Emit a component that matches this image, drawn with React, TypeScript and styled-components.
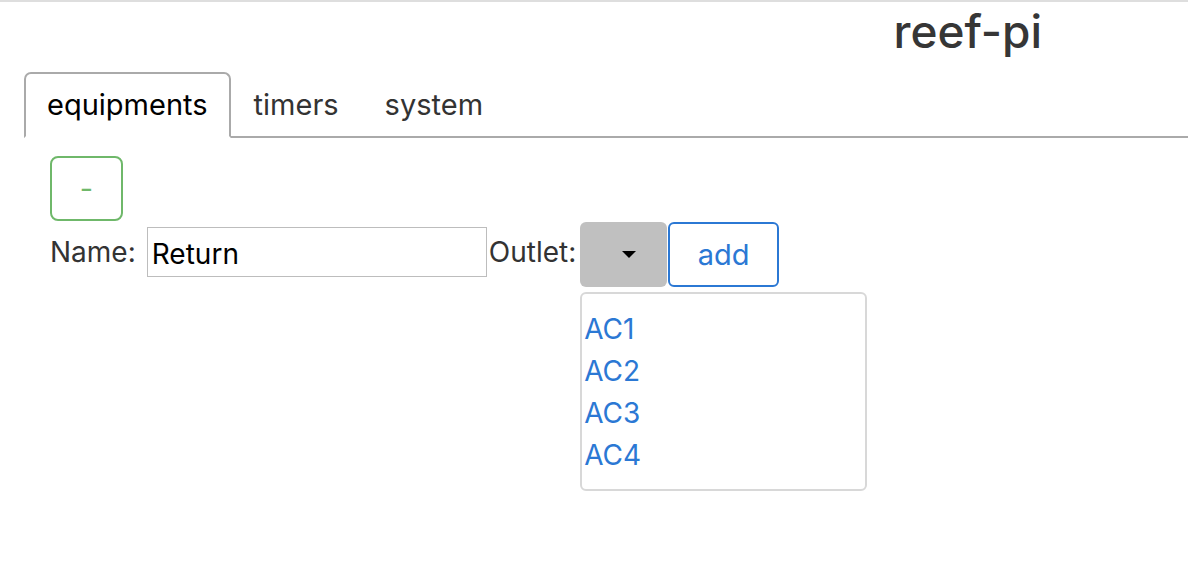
import styled, { createGlobalStyle } from "styled-components";

const GlobalStyle = createGlobalStyle`
  html, body {
    margin: 0;
    padding: 0;
    background: #fff;
  }
  body {
    font-family: Inter, "Liberation Sans", Arial, sans-serif;
    color: #333;
  }
`;

const outlets = ["AC1", "AC2", "AC3", "AC4"];
const tabs = ["equipments", "timers", "system"];

const App = () => {
  return (
    <>
      <GlobalStyle />
      <Page>
        <Header>
          <Title>reef-pi</Title>
        </Header>
        <TabList>
          {tabs.map((name, i) => (
            <Tab key={name} active={i === 0}>{name}</Tab>
          ))}
        </TabList>
        <Content>
          <RemoveButton>-</RemoveButton>
          <FormRow>
            <Label>Name:</Label>
            <NameInput defaultValue="Return" />
            <Label>Outlet:</Label>
            <Dropdown>
              <Toggle>
                <Caret />
              </Toggle>
              <Menu>
                {outlets.map((o) => (
                  <MenuItem key={o}>{o}</MenuItem>
                ))}
              </Menu>
            </Dropdown>
            <AddButton>add</AddButton>
          </FormRow>
        </Content>
      </Page>
    </>
  );
};

export default App;

const Page = styled.div`
  border-top: 2px solid #dedede;
  min-height: 578px;
`;

const Header = styled.div`
  display: flex;
  justify-content: flex-end;
  padding-right: 146px;
`;

const Title = styled.h1`
  margin: 0;
  font-size: 46px;
  line-height: 58px;
  font-weight: 500;
  color: #363636;
`;

const TabList = styled.div`
  display: flex;
  margin: 12px 0 0 24px;
  border-bottom: 2px solid #aaa;
`;

const Tab = styled.div<{ active?: boolean }>`
  font-size: 29px;
  line-height: 34px;
  padding: 14px 21px 14px 21px;
  margin-bottom: -2px;
  border: 2px solid ${(p) => (p.active ? "#aaa" : "transparent")};
  border-bottom-color: ${(p) => (p.active ? "#fff" : "transparent")};
  border-radius: 7px 7px 0 0;
  color: ${(p) => (p.active ? "#000" : "#333")};
  background: ${(p) => (p.active ? "#fff" : "transparent")};
`;

const Content = styled.div`
  padding: 18px 0 0 50px;
`;

const RemoveButton = styled.button`
  display: block;
  width: 73px;
  height: 65px;
  border: 2px solid #6fb86a;
  border-radius: 8px;
  background: #fff;
  color: #6fb86a;
  font-family: inherit;
  font-size: 29px;
  padding: 0;
`;

const FormRow = styled.div`
  display: flex;
  align-items: flex-start;
  margin-top: 1px;
`;

const Label = styled.span`
  font-size: 28px;
  line-height: 34px;
  margin-top: 13px;
  color: #333;
`;

const NameInput = styled.input`
  box-sizing: border-box;
  width: 340px;
  height: 50px;
  margin: 5px 2px 0 11px;
  padding: 4px 4px 0;
  border: 1px solid #bdbdbd;
  border-radius: 0;
  font-family: inherit;
  font-size: 28px;
  line-height: 34px;
  color: #000;
  outline: none;
`;

const Dropdown = styled.div`
  position: relative;
  margin-left: 4px;
`;

const Toggle = styled.button`
  display: flex;
  align-items: center;
  justify-content: center;
  width: 87px;
  height: 65px;
  border: none;
  border-radius: 6px;
  background: #c0c0c0;
  padding: 0 0 0 10px;
`;

const Caret = styled.span`
  width: 0;
  height: 0;
  border-top: 7px solid #000;
  border-left: 7px solid transparent;
  border-right: 7px solid transparent;
`;

const Menu = styled.div`
  position: absolute;
  top: 70px;
  left: 0;
  box-sizing: border-box;
  width: 287px;
  height: 199px;
  padding: 14px 0 0 2px;
  border: 2px solid #d8d8d8;
  border-radius: 6px;
  background: #fff;
`;

const MenuItem = styled.div`
  font-size: 28px;
  line-height: 42px;
  color: #2b78d4;
`;

const AddButton = styled.button`
  box-sizing: border-box;
  width: 111px;
  height: 65px;
  margin-left: 1px;
  border: 2px solid #2b78d4;
  border-radius: 6px;
  background: #fff;
  color: #2b78d4;
  font-family: inherit;
  font-size: 29px;
  padding: 0;
`;
